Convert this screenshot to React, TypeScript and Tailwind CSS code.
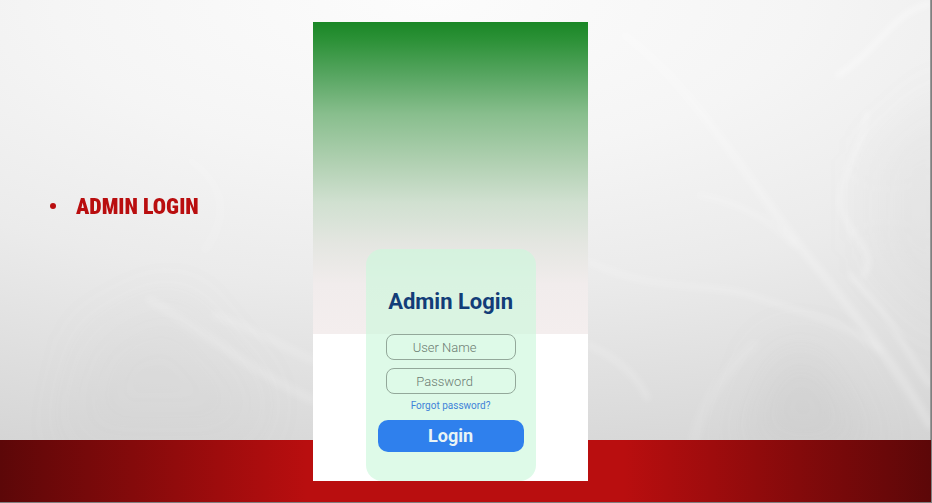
import React from "react";

function SilkBackdrop() {
  return (
    <svg
      aria-hidden="true"
      className="col-span-full row-start-1 h-full w-full border-r border-[#9a9a9a]"
      viewBox="0 0 931 440"
      preserveAspectRatio="none"
    >
      <defs>
        <radialGradient id="paper" gradientUnits="userSpaceOnUse" cx="0" cy="0" r="1" gradientTransform="translate(430 0) scale(1250 520)">
          <stop offset="0" stopColor="#fcfcfc" />
          <stop offset="0.3" stopColor="#f5f5f5" />
          <stop offset="0.55" stopColor="#ebebeb" />
          <stop offset="0.8" stopColor="#dcdcdc" />
          <stop offset="1" stopColor="#d0d0d0" />
        </radialGradient>
        <filter id="soft" x="-20%" y="-20%" width="140%" height="140%">
          <feGaussianBlur stdDeviation="3" />
        </filter>
        <filter id="wide" x="-80%" y="-80%" width="260%" height="260%">
          <feGaussianBlur stdDeviation="24" />
        </filter>
      </defs>
      <rect width="931" height="440" fill="url(#paper)" />
      <g filter="url(#wide)">
        <path d="M70 440L95 340L175 300L260 400L240 440Z" fill="#bdbdbd" opacity="0.12" />
        <path d="M740 450L780 350L820 350L875 450Z" fill="#adadad" opacity="0.18" />
        <path d="M880 160L960 90L960 330L880 250Z" fill="#c0c0c0" opacity="0.15" />
      </g>
      <g filter="url(#soft)" fill="none" stroke="#ffffff" strokeLinecap="round">
        <path d="M931 4C895 10 880 50 838 76" strokeWidth="4" opacity="0.55" />
        <path d="M868 112C864 150 838 170 842 208C850 240 880 250 865 275" strokeWidth="5" opacity="0.3" />
        <path d="M625 35C700 90 760 200 820 270C860 320 900 370 931 425" strokeWidth="8" opacity="0.24" />
        <path d="M850 275C890 310 905 350 931 385" strokeWidth="5" opacity="0.28" />
        <path d="M700 195C750 205 775 225 795 245" strokeWidth="6" opacity="0.2" />
        <path d="M590 262C660 295 710 280 760 298S840 318 880 350" strokeWidth="6" opacity="0.2" />
        <path d="M590 345C625 362 640 380 648 398" strokeWidth="6" opacity="0.2" />
        <path d="M755 345C725 370 705 400 695 440" strokeWidth="12" opacity="0.1" />
        <path d="M150 300C210 335 250 370 313 400" strokeWidth="9" opacity="0.16" />
        <path d="M190 160C225 185 230 215 205 250" strokeWidth="7" opacity="0.14" />
        <path d="M215 315C245 325 280 345 313 360" strokeWidth="9" opacity="0.15" />
      </g>
    </svg>
  );
}

function LoginField({ label, type }: { label: string; type: string }) {
  return (
    <input
      type={type}
      aria-label={label}
      placeholder={label}
      className="h-[26px] w-[130px] rounded-lg border border-[#93a89a] bg-transparent pr-3 text-center text-[13px] font-light text-[#6c7c72] outline-none placeholder:text-[#6c7c72]"
    />
  );
}

function PhoneScreen() {
  return (
    <section className="z-10 col-start-2 row-span-2 row-start-1 mt-[22px] mb-[21px] bg-white font-[Roboto,sans-serif]">
      <div className="bg-[linear-gradient(180deg,#1a8726_0px,#2c9137_18px,#58a662_54px,#88be8d_92px,#b0d0b1_140px,#d0e0d0_180px,#e4e6e1_222px,#f1ecec_262px,#f4eeee_312px)] bg-[length:100%_312px] bg-no-repeat pt-[227px]">
        <form
          onSubmit={(event) => event.preventDefault()}
          className="mx-auto flex h-[232px] w-[170px] flex-col items-center rounded-2xl bg-[#ccf7dc]/65 pt-[37px]"
        >
          <h1 className="mb-4 text-[22px] leading-8 font-bold whitespace-nowrap text-[#123d78]">Admin Login</h1>
          <div className="flex flex-col gap-2">
            <LoginField label="User Name" type="text" />
            <LoginField label="Password" type="password" />
          </div>
          <a href="#forgot" className="mt-1 text-[10px] leading-4 text-[#3f83d8]">
            Forgot password?
          </a>
          <button type="submit" className="mt-[6px] h-8 w-[146px] rounded-[10px] bg-[#2f80ed] text-lg font-bold text-[#e8f4f5]">
            Login
          </button>
        </form>
      </div>
    </section>
  );
}

export default function App() {
  return (
    <main className="grid min-h-screen grid-cols-[21fr_275px_23fr] grid-rows-[1fr_62px] border-r border-b border-[#7f7f7f] bg-[#d8d8d8]">
      <SilkBackdrop />
      <div className="col-span-full row-start-2 bg-[linear-gradient(90deg,#5c0708_0%,#b90e0f_33%,#b90e0f_67%,#5c0708_100%)]" />
      <ul className="z-10 col-start-1 row-start-1 self-center pb-7 pl-[50px] text-[#b90e0f]">
        <li className="flex items-center gap-5">
          <span className="size-[6px] rounded-full bg-current" />
          <span className="font-[Impact,'Roboto_Condensed',Roboto,sans-serif] text-[22px] font-black whitespace-nowrap uppercase">
            Admin Login
          </span>
        </li>
      </ul>
      <PhoneScreen />
    </main>
  );
}
